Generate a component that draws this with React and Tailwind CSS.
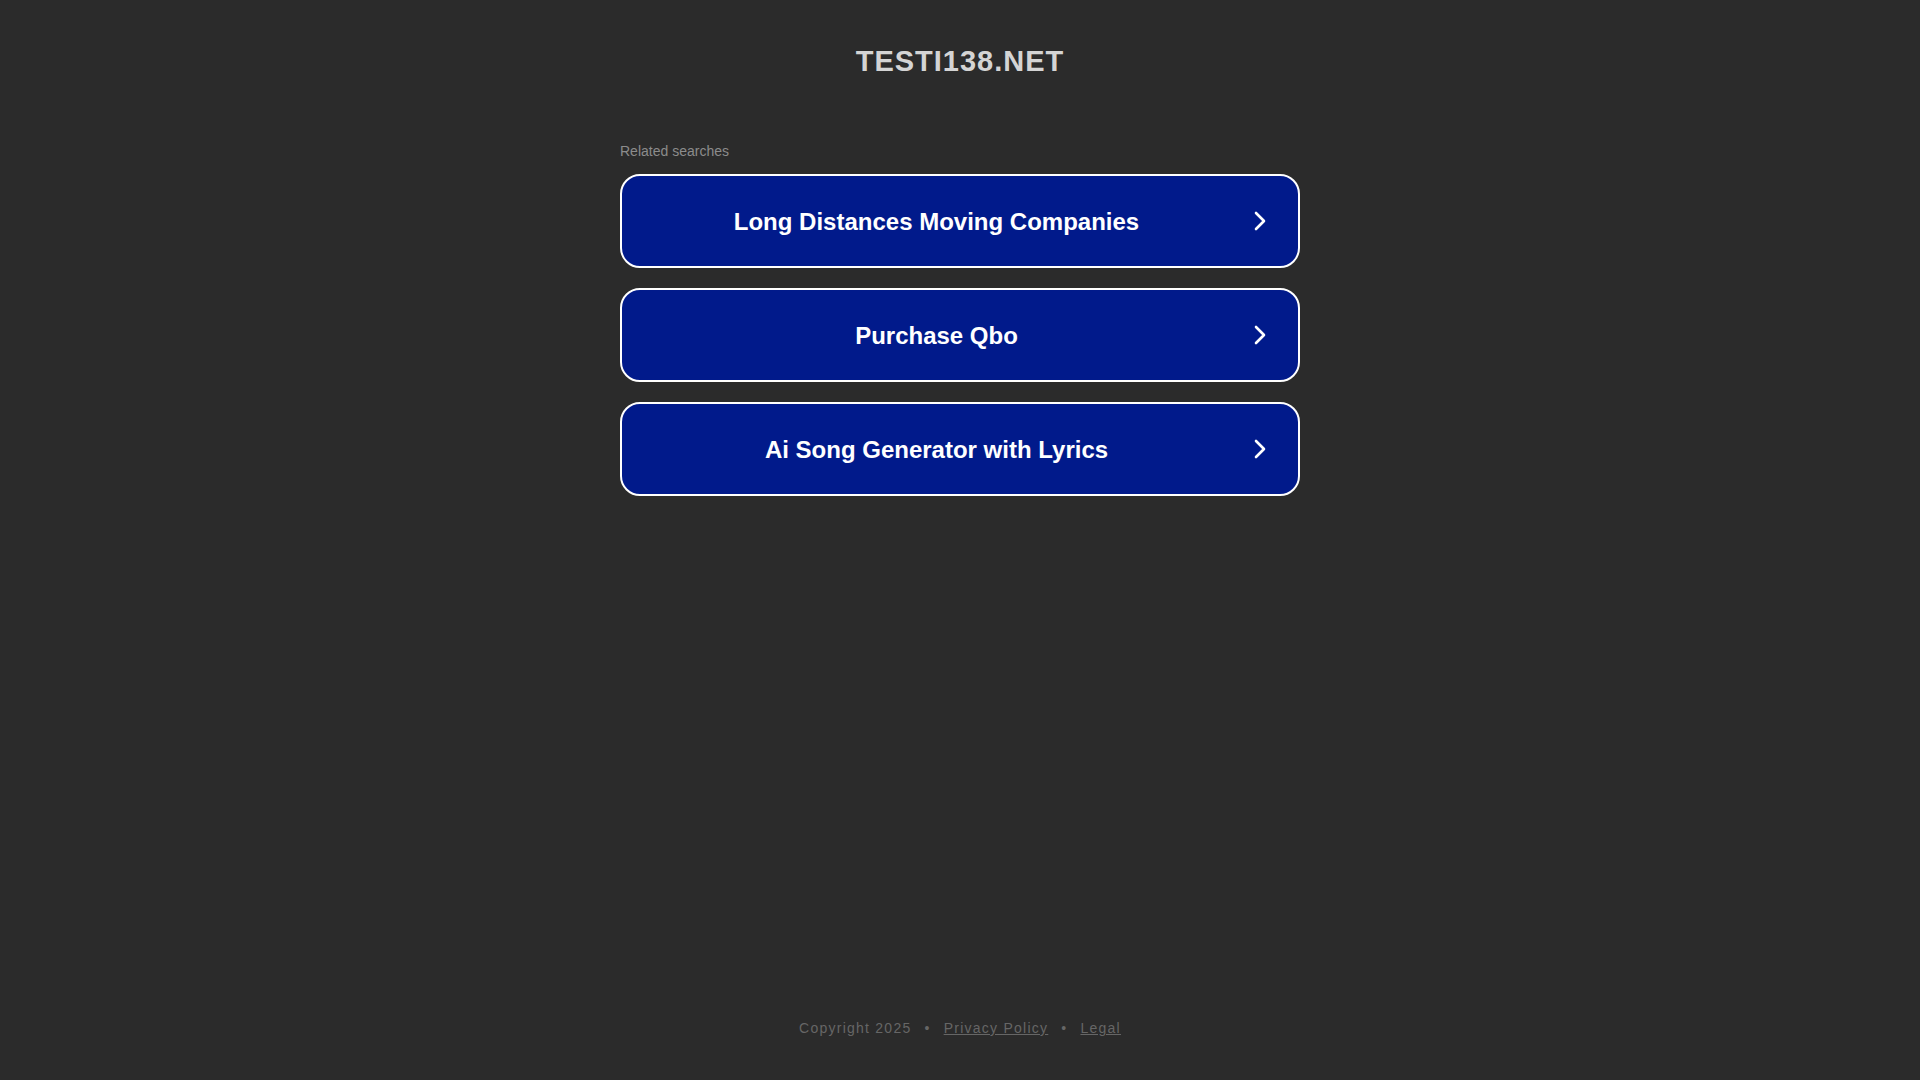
import React from 'react';

const searches = [
  'Long Distances Moving Companies',
  'Purchase Qbo',
  'Ai Song Generator with Lyrics',
];

const Chevron = () => (
  <svg width="14" height="22" viewBox="0 0 14 22" fill="none" className="shrink-0">
    <path d="M3 3l8 8-8 8" stroke="white" strokeWidth="2.6" strokeLinecap="round" strokeLinejoin="round" />
  </svg>
);

export default function App() {
  return (
    <div
      className="min-h-[1080px] bg-[#2b2b2b] flex flex-col items-center"
      style={{ fontFamily: '"Liberation Sans", Arial, sans-serif' }}
    >
      <h1 className="mt-[44px] text-[29px] leading-[34px] font-bold tracking-[1px] text-[#d4d4d4]">
        TESTI138.NET
      </h1>

      <div className="w-[680px] mt-[64px]">
        <p className="text-[14px] leading-[18px] text-[#8c8c8c]">Related searches</p>
        <div className="mt-[14px] flex flex-col gap-[20px]">
          {searches.map(s => (
            <a
              key={s}
              href="#"
              className="h-[94px] flex items-center rounded-[20px] border-2 border-white bg-[#011a8b] pl-[20px] pr-[31px]"
            >
              <span className="flex-1 text-center text-[24px] font-bold text-white pr-[22px] pt-[2px]">{s}</span>
              <Chevron />
            </a>
          ))}
        </div>
      </div>

      <div className="mt-auto mb-[41px] text-[14px] tracking-[1.25px] text-[#666666] flex items-center">
        <span>Copyright 2025</span>
        <span className="mx-[13px]">•</span>
        <a href="#" className="underline">Privacy Policy</a>
        <span className="mx-[13px]">•</span>
        <a href="#" className="underline">Legal</a>
      </div>
    </div>
  );
}
